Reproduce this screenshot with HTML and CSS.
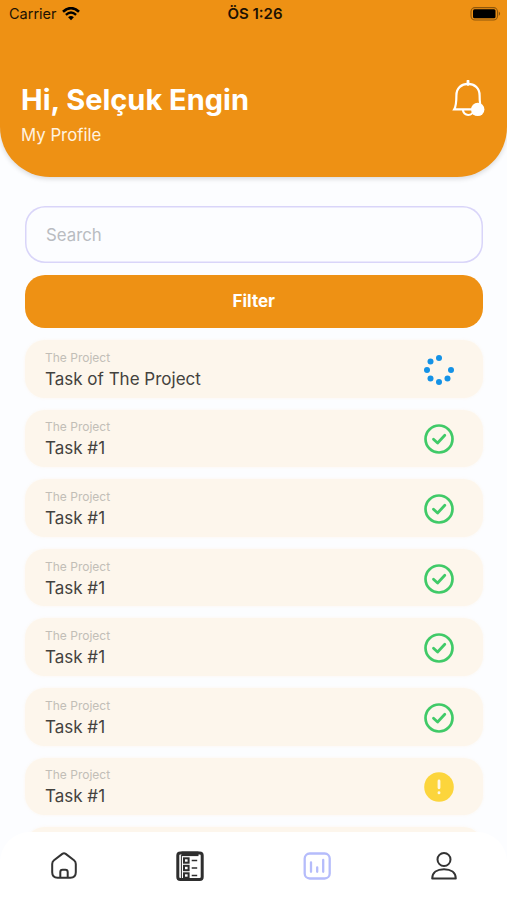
FILE: index.html
```
<!DOCTYPE html>
<html lang="tr">
<head>
  <meta charset="UTF-8">
  <meta name="viewport" content="width=device-width, initial-scale=1.0">
  <title>Tasks</title>
  <link rel="stylesheet" href="styles.css">
</head>
<body>
  <div class="screen">
    <header class="header">
      <div class="status-bar">
        <div class="carrier">
          <span>Carrier</span>
          <svg width="18" height="14" viewBox="0 0 18 14">
            <path d="M1 4.7 Q9 -2.3 17 4.7" fill="none" stroke="#000" stroke-width="2.7"/>
            <path d="M3.9 7.8 Q9 3.3 14.1 7.8" fill="none" stroke="#000" stroke-width="2.4"/>
            <path d="M6.1 10.3 Q9 7.9 11.9 10.3 L9 13.3 Z" fill="#000"/>
          </svg>
        </div>
        <span class="clock">ÖS 1:26</span>
        <svg class="battery" width="31" height="14" viewBox="0 0 31 14">
          <rect x="1" y="0.6" width="26.5" height="12.4" rx="4" fill="none" stroke="#000" stroke-opacity=".4" stroke-width="1.1"/>
          <rect x="3" y="2.3" width="22.5" height="9" rx="1.5" fill="#000"/>
          <path d="M28.8 4.6 Q31.4 6.8 28.8 9 Z" fill="#000" fill-opacity=".45"/>
        </svg>
      </div>
      <div class="profile">
        <div>
          <h1>Hi, Selçuk Engin</h1>
          <p>My Profile</p>
        </div>
        <svg class="bell" width="34" height="38" viewBox="0 0 34 38">
          <g fill="none" stroke="#fff" stroke-width="2.2">
            <path d="M16 1v3.5" stroke-width="2.8" stroke-linecap="round"/>
            <path d="M2.2 29.4C4.2 26 4.4 23 4.4 15.5C4.4 8 9.5 3.9 16 3.9S27.6 8 27.6 15.5C27.6 23 27.8 26 29.8 29.4Z"/>
            <path d="M11 30a5.2 5 0 0 0 10.4 0"/>
          </g>
          <circle cx="25.7" cy="29.4" r="6.7" fill="#fff"/>
        </svg>
      </div>
    </header>

    <main class="content">
      <input class="search" type="text" placeholder="Search">
      <button class="filter" type="button">Filter</button>

      <div class="task">
        <div><small>The Project</small><p>Task of The Project</p></div>
        <svg width="30" height="30" viewBox="0 0 30 30" fill="#1492e6">
          <circle cx="15" cy="3" r="3"/>
          <circle cx="6.5" cy="6.5" r="3"/>
          <circle cx="3" cy="15" r="3"/>
          <circle cx="6.5" cy="23.5" r="3"/>
          <circle cx="15" cy="27" r="3"/>
          <circle cx="23.5" cy="23.5" r="3"/>
          <circle cx="27" cy="15" r="3"/>
        </svg>
      </div>
      <div class="task">
        <div><small>The Project</small><p>Task #1</p></div>
        <svg width="30" height="30"><use href="#check"/></svg>
      </div>
      <div class="task">
        <div><small>The Project</small><p>Task #1</p></div>
        <svg width="30" height="30"><use href="#check"/></svg>
      </div>
      <div class="task">
        <div><small>The Project</small><p>Task #1</p></div>
        <svg width="30" height="30"><use href="#check"/></svg>
      </div>
      <div class="task">
        <div><small>The Project</small><p>Task #1</p></div>
        <svg width="30" height="30"><use href="#check"/></svg>
      </div>
      <div class="task">
        <div><small>The Project</small><p>Task #1</p></div>
        <svg width="30" height="30"><use href="#check"/></svg>
      </div>
      <div class="task">
        <div><small>The Project</small><p>Task #1</p></div>
        <svg width="30" height="30" viewBox="0 0 30 30">
          <circle cx="15" cy="15" r="14.8" fill="#fcd53c"/>
          <path d="M15 9v6.8M15 20.6v.3" stroke="#fff8e6" stroke-width="2.8" stroke-linecap="round"/>
        </svg>
      </div>
      <div class="task"></div>
    </main>

    <nav class="tabs">
      <a href="#">
        <svg width="28" height="28" viewBox="0 0 28 28" fill="none" stroke="#333" stroke-width="2" stroke-linejoin="round">
          <path d="M13.3 1.9Q15 .8 16.7 1.9L25 8.3Q26.8 9.7 26.8 12V20.3Q26.8 25.7 21.4 25.7H8.6Q3.2 25.7 3.2 20.3V12Q3.2 9.7 5 8.3Z"/>
          <path d="M11.3 25.5V20.2Q11.3 17.8 13.6 17.8H16.4Q18.7 17.8 18.7 20.2V25.5"/>
        </svg>
      </a>
      <a href="#">
        <svg width="28" height="30" viewBox="0 0 28 30" fill="none" stroke="#2e2e2e">
          <rect x="1.8" y="2" width="24.4" height="26.4" rx="2.5" stroke-width="3"/>
          <path d="M5.5 2.8H22.5" stroke-width="4.6"/>
          <path d="M5.4 4V28" stroke-width="1"/>
          <g stroke-width="2">
            <rect x="8" y="7.3" width="4.6" height="4.4"/>
            <rect x="8" y="14.8" width="4.6" height="4.4"/>
            <rect x="8" y="22.3" width="4.6" height="4.4"/>
          </g>
          <path d="M15.7 9.5h5.5M15.7 17h5.5M15.7 24.5h5.5" stroke-width="1.6"/>
        </svg>
      </a>
      <a href="#">
        <svg width="28" height="28" viewBox="0 0 28 28" fill="none" stroke="#b5bcfb" stroke-width="2.3" stroke-linecap="round">
          <rect x="1.7" y="1.5" width="25" height="25" rx="5"/>
          <path d="M8 10.3V19.8M14.2 15.3V19.8M20.2 8V19.8"/>
        </svg>
      </a>
      <a href="#">
        <svg width="28" height="28" viewBox="0 0 28 28" fill="none" stroke="#333" stroke-width="2" stroke-linejoin="round">
          <circle cx="14" cy="7.5" r="6.5"/>
          <path d="M2.2 26.6C2.2 20.5 7.2 17.2 14 17.2S25.8 20.5 25.8 26.6Z"/>
        </svg>
      </a>
    </nav>
  </div>

  <svg class="icons">
    <symbol id="check" viewBox="0 0 30 30">
      <circle cx="15" cy="15" r="13.5" fill="none" stroke="#40ca68" stroke-width="2.7"/>
      <path d="M9.5 15.2L13.6 19L20.8 11.3" fill="none" stroke="#40ca68" stroke-width="2.8" stroke-linecap="round" stroke-linejoin="round"/>
    </symbol>
  </svg>
</body>
</html>
```
FILE: styles.css
```
* {
  box-sizing: border-box;
}
body {
  margin: 0;
  font-family: Inter, sans-serif;
  background: #fcfdff;
}
h1, p {
  margin: 0;
}
.screen {
  height: 900px;
  display: flex;
  flex-direction: column;
  overflow: hidden;
}
.header {
  flex: none;
  height: 177px;
  background: #ee9114;
  border-radius: 0 0 50px 50px;
  box-shadow: 0 2px 5px rgba(0,0,0,0.14);
}
.status-bar {
  height: 27px;
  padding: 0 6px 0 9px;
  display: grid;
  grid-template-columns: 1fr auto 1fr;
  align-items: center;
  font-size: 14.5px;
  color: #1d1203;
}
.carrier {
  display: flex;
  align-items: center;
  gap: 5px;
}
.clock {
  font-weight: 600;
  font-size: 15px;
}
.battery {
  justify-self: end;
}
.profile {
  padding: 53px 21px 0 21px;
  display: flex;
  justify-content: space-between;
  color: #fff;
}
.profile h1 {
  font-size: 29px;
  line-height: 40px;
  font-weight: 700;
}
.profile p {
  font-size: 16.8px;
  line-height: 30px;
  color: #fff3e0;
}
.content {
  flex: 1;
  min-height: 0;
  overflow: hidden;
  padding: 29px 24.5px 0 25px;
}
.search {
  display: block;
  width: 100%;
  height: 56.5px;
  padding: 1px 21px 0;
  border: none;
  border-radius: 20px;
  background: #fcfdff;
  box-shadow: inset 0 0 0 1.5px #d9d5f9;
  font-family: inherit;
  font-size: 16.8px;
}
.search::placeholder {
  color: #b9bcc1;
}
.filter {
  display: block;
  width: 100%;
  height: 53.5px;
  margin: 12px 0;
  border: none;
  border-radius: 20px;
  background: #ee9114;
  color: #fff;
  font-family: inherit;
  font-size: 17px;
  font-weight: 700;
}
.task {
  height: 57.6px;
  margin-bottom: 12px;
  padding: 2px 29px 0 20px;
  display: flex;
  align-items: center;
  justify-content: space-between;
  background: #fdf6ec;
  border-radius: 20px;
  box-shadow: 0 0 3px rgba(253,246,236,0.9);
}
.task small {
  display: block;
  font-size: 12px;
  line-height: 18px;
  color: #c2beb7;
}
.task p {
  font-size: 17px;
  line-height: 24px;
  color: #44423e;
}
.tabs {
  flex: none;
  position: relative;
  height: 68px;
  display: grid;
  grid-template-columns: repeat(4, 1fr);
  align-items: center;
  justify-items: center;
  background: #fff;
  border-radius: 30px 30px 0 0;
}
.tabs a {
  display: flex;
}
.icons {
  display: none;
}
```
